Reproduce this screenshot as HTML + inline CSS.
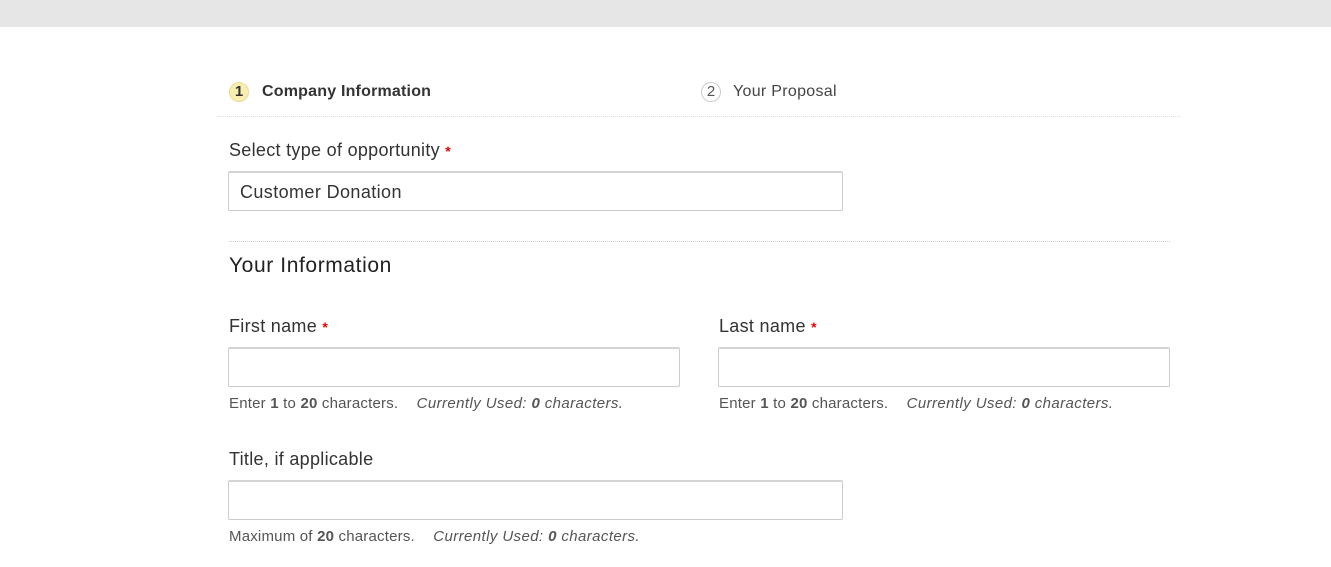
<!DOCTYPE html>
<html><head><style>
body{margin:0;width:1331px;height:567px;background:#fff;font-family:"Liberation Sans",sans-serif;color:#333;position:relative;overflow:hidden}
.a{position:absolute;white-space:nowrap}
.top{left:0;top:0;width:1331px;height:27px;background:#e6e6e6}
.circ{width:20px;height:20px;border-radius:50%;border:1px solid #ccc;box-sizing:border-box;text-align:center;font-size:15px;line-height:18px}
.lbl{font-size:18px;color:#333;letter-spacing:0.3px}
.req{color:#e00;font-weight:bold;font-size:14px}
.in{border:1px solid #ccc;border-top:2px solid #d4d4d4;border-radius:2px;box-sizing:border-box;height:40px}
.hint{font-size:15px;color:#555;letter-spacing:0.2px}
.hint i{margin-left:14px;letter-spacing:0.4px}
</style></head><body>
<div class="a top"></div>
<div class="a circ" style="left:229px;top:82px;background:#f7eeb0;border-color:#e8dc9a;font-weight:bold">1</div>
<div class="a" style="left:262px;top:83px;font-size:16px;font-weight:bold;color:#333;letter-spacing:0.2px">Company Information</div>
<div class="a circ" style="left:701px;top:82px;color:#555">2</div>
<div class="a" style="left:733px;top:83px;font-size:16px;color:#444;letter-spacing:0.3px">Your Proposal</div>
<div class="a" style="left:218px;top:116px;width:962px;border-top:1px dotted #ddd"></div>
<div class="a lbl" style="left:229px;top:140px">Select type of opportunity <span class="req">*</span></div>
<div class="a in" style="left:228px;top:171px;width:615px;font-size:18px;padding:9px 11px;color:#333;letter-spacing:0.4px">Customer Donation</div>
<div class="a" style="left:229px;top:241px;width:941px;border-top:1px dotted #ccc"></div>
<div class="a" style="left:229px;top:254px;font-size:21px;color:#222;letter-spacing:0.6px">Your Information</div>
<div class="a lbl" style="left:229px;top:316px">First name <span class="req">*</span></div>
<div class="a in" style="left:228px;top:347px;width:452px"></div>
<div class="a hint" style="left:229px;top:395px">Enter <b>1</b> to <b>20</b> characters. <i>Currently Used: <b>0</b> characters.</i></div>
<div class="a lbl" style="left:719px;top:316px">Last name <span class="req">*</span></div>
<div class="a in" style="left:718px;top:347px;width:452px"></div>
<div class="a hint" style="left:719px;top:395px">Enter <b>1</b> to <b>20</b> characters. <i>Currently Used: <b>0</b> characters.</i></div>
<div class="a lbl" style="left:229px;top:449px">Title, if applicable</div>
<div class="a in" style="left:228px;top:480px;width:615px"></div>
<div class="a hint" style="left:229px;top:528px">Maximum of <b>20</b> characters. <i>Currently Used: <b>0</b> characters.</i></div>
</body></html>
